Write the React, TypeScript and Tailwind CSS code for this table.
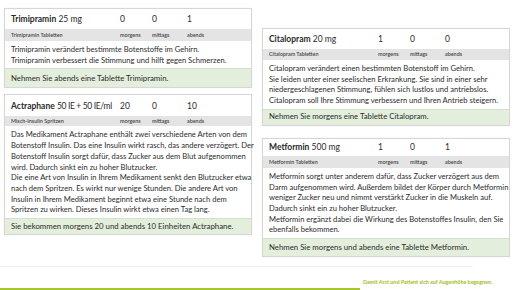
import React from 'react'

interface MedProps {
  name: string
  dose: string
  doseTight?: boolean
  values: [string, string, string]
  sub: string
  lines: string[]
  footer: string
  titleH: string
  subH: string
  footH: string
}

function MedCard({ name, dose, doseTight, values, sub, lines, footer, titleH, subH, footH }: MedProps) {
  return (
    <div className="border border-[#d6d6d6] bg-white shadow-[0_0_2px_rgba(0,0,0,0.06)] text-[#2b2b2b]">
      {/* Kopfzeile */}
      <div className={`flex items-center pl-[6px] text-[8.5px] ${titleH}`}>
        <div className="w-[109px] whitespace-nowrap">
          <span className="font-bold">{name}</span>{' '}
          <span className={doseTight ? 'tracking-[-0.35px]' : ''}>{dose}</span>
        </div>
        <div className="w-[32px]">{values[0]}</div>
        <div className="w-[35px]">{values[1]}</div>
        <div>{values[2]}</div>
      </div>
      <div className={`flex items-center pl-[6px] bg-[#e4e4e4] text-[5.4px] font-semibold text-[#444] ${subH}`}>
        <div className="w-[109px]">{sub}</div>
        <div className="w-[32px]">morgens</div>
        <div className="w-[35px]">mittags</div>
        <div>abends</div>
      </div>
      {/* Beschreibung */}
      <div className="px-[6px] py-[3px] text-[7.6px] leading-[10.7px]">
        {lines.map((l, i) => (
          <div key={i} className="whitespace-nowrap">{l}</div>
        ))}
      </div>
      <div className={`flex items-center pl-[6px] bg-[#e3efdc] border-t border-[#d3e3cb] text-[7.8px] ${footH}`}>
        {footer}
      </div>
    </div>
  )
}

export default function App() {
  return (
    <div
      className="w-[516px] h-[290px] bg-white overflow-hidden flex flex-col"
      style={{ fontFamily: 'Lato, "Open Sans", sans-serif' }}
    >
      <div className="h-[266px] flex pl-[4px] gap-[10px]">
        <div className="w-[248px] pt-[8px] flex flex-col gap-[6px]">
          <MedCard
            name="Trimipramin"
            dose="25 mg"
            values={['0', '0', '1']}
            sub="Trimipramin Tabletten"
            lines={[
              'Trimipramin verändert bestimmte Botenstoffe im Gehirn.',
              'Trimipramin verbessert die Stimmung und hilft gegen Schmerzen.',
            ]}
            footer="Nehmen Sie abends eine Tablette Trimipramin."
            titleH="h-[20px]"
            subH="h-[12px]"
            footH="h-[19px]"
          />
          <MedCard
            name="Actraphane"
            dose="50 IE + 50 IE/ml"
            doseTight
            values={['20', '0', '10']}
            sub="Misch-Insulin Spritzen"
            lines={[
              'Das Medikament Actraphane enthält zwei verschiedene Arten von dem',
              'Botenstoff Insulin. Das eine Insulin wirkt rasch, das andere verzögert. Der',
              'Botenstoff Insulin sorgt dafür, dass Zucker aus dem Blut aufgenommen',
              'wird. Dadurch sinkt ein zu hoher Blutzucker.',
              'Die eine Art von Insulin in Ihrem Medikament senkt den Blutzucker etwa',
              'nach dem Spritzen. Es wirkt nur wenige Stunden. Die andere Art von',
              'Insulin in Ihrem Medikament beginnt etwa eine Stunde nach dem',
              'Spritzen zu wirken. Dieses Insulin wirkt etwa einen Tag lang.',
            ]}
            footer="Sie bekommen morgens 20 und abends 10 Einheiten Actraphane."
            titleH="h-[21px]"
            subH="h-[10px]"
            footH="h-[16px]"
          />
        </div>
        <div className="w-[248px] pt-[28px] flex flex-col gap-[12px]">
          <MedCard
            name="Citalopram"
            dose="20 mg"
            values={['1', '0', '0']}
            sub="Citalopram Tabletten"
            lines={[
              'Citalopram verändert einen bestimmten Botenstoff im Gehirn.',
              'Sie leiden unter einer seelischen Erkrankung. Sie sind in einer sehr',
              'niedergeschlagenen Stimmung, fühlen sich lustlos und antriebslos.',
              'Citalopram soll Ihre Stimmung verbessern und Ihren Antrieb steigern.',
            ]}
            footer="Nehmen Sie morgens eine Tablette Citalopram."
            titleH="h-[20px]"
            subH="h-[11px]"
            footH="h-[16px]"
          />
          <MedCard
            name="Metformin"
            dose="500 mg"
            values={['1', '0', '1']}
            sub="Metformin Tabletten"
            lines={[
              'Metformin sorgt unter anderem dafür, dass Zucker verzögert aus dem',
              'Darm aufgenommen wird. Außerdem bildet der Körper durch Metformin',
              'weniger Zucker neu und nimmt verstärkt Zucker in die Muskeln auf.',
              'Dadurch sinkt ein zu hoher Blutzucker.',
              'Metformin ergänzt dabei die Wirkung des Botenstoffes Insulin, den Sie',
              'ebenfalls bekommen.',
            ]}
            footer="Nehmen Sie morgens und abends eine Tablette Metformin."
            titleH="h-[17px]"
            subH="h-[12px]"
            footH="h-[18px]"
          />
        </div>
      </div>
      <div className="w-[473px] border-t border-[#eef2f4]" />
      <div className="flex-1 flex items-end">
        <div className="w-[360px] h-[2px] bg-[#a6c72a]" />
        <div className="ml-[3px] mb-[4px] text-[5.4px] font-bold text-[#9cc21e] whitespace-nowrap">
          Damit Arzt und Patient sich auf Augenhöhe begegnen.
        </div>
      </div>
    </div>
  )
}
